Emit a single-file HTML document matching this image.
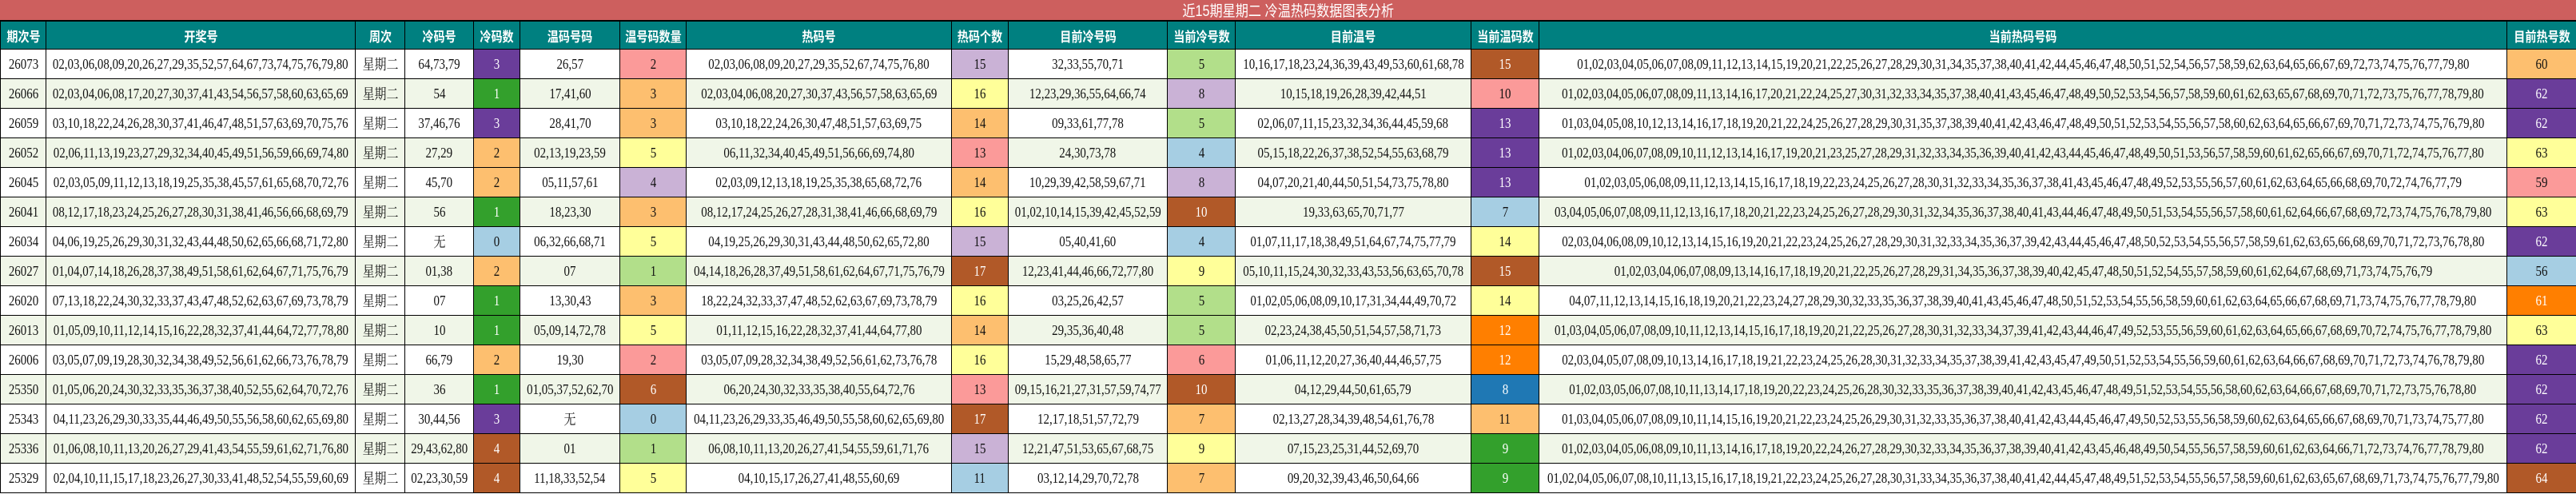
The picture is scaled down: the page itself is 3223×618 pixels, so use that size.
<!DOCTYPE html>
<html><head><meta charset="utf-8">
<style>
*{margin:0;padding:0;box-sizing:border-box}
body{width:3223px;height:618px;overflow:hidden;background:#fff;font-family:"Liberation Serif","Noto Serif CJK SC","Noto Sans CJK SC",serif;}
.t{height:27px;background:#cd5f5e;border-bottom:2px solid #000;display:flex;justify-content:center;align-items:center;color:#fff;font-family:"Liberation Sans","Noto Sans CJK SC",sans-serif;font-size:19px}
.r{display:flex;height:37px;border-bottom:1px solid #000}
.h{height:35px;background:#008080;color:#fff;font-family:"Liberation Sans","Noto Sans CJK SC",sans-serif;font-weight:bold;font-size:17px}
.g{background:#f0f6e8}
.r>p{display:flex;justify-content:center;align-items:center;border-right:1px solid #000;height:100%;white-space:nowrap;overflow:visible;font-size:18px;color:#111}
.h>p{color:#fff;font-size:17px}
.r>p:first-child{border-left:1px solid #000}
.r>p>span{display:inline-block;transform:scaleX(.83)}
.r>p:nth-child(1){width:58px}.r>p:nth-child(2){width:387px}.r>p:nth-child(3){width:62px}
.r>p:nth-child(4){width:86px}.r>p:nth-child(5){width:58px}.r>p:nth-child(6){width:125px}
.r>p:nth-child(7){width:83px}.r>p:nth-child(8){width:332px}.r>p:nth-child(9){width:71px}
.r>p:nth-child(10){width:199px}.r>p:nth-child(11){width:85px}.r>p:nth-child(12){width:295px}
.r>p:nth-child(13){width:85px}.r>p:nth-child(14){width:1211px}.r>p:nth-child(15){width:86px;border-right:none}
.r>p.P{background:#6a3d9a;color:#fff}.r>p.G{background:#33a02c;color:#fff}.r>p.B{background:#b15928;color:#fff}
.r>p.O{background:#ff7f00;color:#fff}.r>p.U{background:#1f78b4;color:#fff}
.r>p.E{background:#fdbf6f}.r>p.K{background:#fb9a99}.r>p.Y{background:#ffff99}.r>p.L{background:#cab2d6}
.r>p.M{background:#b2df8a}.r>p.A{background:#a6cee3}
</style></head><body>
<div class="t"><span style="display:inline-block;transform:scaleX(.85)">近15期星期二 冷温热码数据图表分析</span></div>
<div class="r h"><p><span>期次号</span></p><p><span>开奖号</span></p><p><span>周次</span></p><p><span>冷码号</span></p><p><span>冷码数</span></p><p><span>温码号码</span></p><p><span>温号码数量</span></p><p><span>热码号</span></p><p><span>热码个数</span></p><p><span>目前冷号码</span></p><p><span>当前冷号数</span></p><p><span>目前温号</span></p><p><span>当前温码数</span></p><p><span>当前热码号码</span></p><p><span>目前热号数</span></p></div>

<div class="r"><p><span>26073</span></p><p><span>02,03,06,08,09,20,26,27,29,35,52,57,64,67,73,74,75,76,79,80</span></p><p><span>星期二</span></p><p><span>64,73,79</span></p><p class="P"><span>3</span></p><p><span>26,57</span></p><p class="K"><span>2</span></p><p><span>02,03,06,08,09,20,27,29,35,52,67,74,75,76,80</span></p><p class="L"><span>15</span></p><p><span>32,33,55,70,71</span></p><p class="M"><span>5</span></p><p><span>10,16,17,18,23,24,36,39,43,49,53,60,61,68,78</span></p><p class="B"><span>15</span></p><p><span>01,02,03,04,05,06,07,08,09,11,12,13,14,15,19,20,21,22,25,26,27,28,29,30,31,34,35,37,38,40,41,42,44,45,46,47,48,50,51,52,54,56,57,58,59,62,63,64,65,66,67,69,72,73,74,75,76,77,79,80</span></p><p class="E"><span>60</span></p></div>

<div class="r g"><p><span>26066</span></p><p><span>02,03,04,06,08,17,20,27,30,37,41,43,54,56,57,58,60,63,65,69</span></p><p><span>星期二</span></p><p><span>54</span></p><p class="G"><span>1</span></p><p><span>17,41,60</span></p><p class="E"><span>3</span></p><p><span>02,03,04,06,08,20,27,30,37,43,56,57,58,63,65,69</span></p><p class="Y"><span>16</span></p><p><span>12,23,29,36,55,64,66,74</span></p><p class="L"><span>8</span></p><p><span>10,15,18,19,26,28,39,42,44,51</span></p><p class="K"><span>10</span></p><p><span>01,02,03,04,05,06,07,08,09,11,13,14,16,17,20,21,22,24,25,27,30,31,32,33,34,35,37,38,40,41,43,45,46,47,48,49,50,52,53,54,56,57,58,59,60,61,62,63,65,67,68,69,70,71,72,73,75,76,77,78,79,80</span></p><p class="P"><span>62</span></p></div>

<div class="r"><p><span>26059</span></p><p><span>03,10,18,22,24,26,28,30,37,41,46,47,48,51,57,63,69,70,75,76</span></p><p><span>星期二</span></p><p><span>37,46,76</span></p><p class="P"><span>3</span></p><p><span>28,41,70</span></p><p class="E"><span>3</span></p><p><span>03,10,18,22,24,26,30,47,48,51,57,63,69,75</span></p><p class="E"><span>14</span></p><p><span>09,33,61,77,78</span></p><p class="M"><span>5</span></p><p><span>02,06,07,11,15,23,32,34,36,44,45,59,68</span></p><p class="P"><span>13</span></p><p><span>01,03,04,05,08,10,12,13,14,16,17,18,19,20,21,22,24,25,26,27,28,29,30,31,35,37,38,39,40,41,42,43,46,47,48,49,50,51,52,53,54,55,56,57,58,60,62,63,64,65,66,67,69,70,71,72,73,74,75,76,79,80</span></p><p class="P"><span>62</span></p></div>

<div class="r g"><p><span>26052</span></p><p><span>02,06,11,13,19,23,27,29,32,34,40,45,49,51,56,59,66,69,74,80</span></p><p><span>星期二</span></p><p><span>27,29</span></p><p class="E"><span>2</span></p><p><span>02,13,19,23,59</span></p><p class="Y"><span>5</span></p><p><span>06,11,32,34,40,45,49,51,56,66,69,74,80</span></p><p class="K"><span>13</span></p><p><span>24,30,73,78</span></p><p class="A"><span>4</span></p><p><span>05,15,18,22,26,37,38,52,54,55,63,68,79</span></p><p class="P"><span>13</span></p><p><span>01,02,03,04,06,07,08,09,10,11,12,13,14,16,17,19,20,21,23,25,27,28,29,31,32,33,34,35,36,39,40,41,42,43,44,45,46,47,48,49,50,51,53,56,57,58,59,60,61,62,65,66,67,69,70,71,72,74,75,76,77,80</span></p><p class="Y"><span>63</span></p></div>

<div class="r"><p><span>26045</span></p><p><span>02,03,05,09,11,12,13,18,19,25,35,38,45,57,61,65,68,70,72,76</span></p><p><span>星期二</span></p><p><span>45,70</span></p><p class="E"><span>2</span></p><p><span>05,11,57,61</span></p><p class="L"><span>4</span></p><p><span>02,03,09,12,13,18,19,25,35,38,65,68,72,76</span></p><p class="E"><span>14</span></p><p><span>10,29,39,42,58,59,67,71</span></p><p class="L"><span>8</span></p><p><span>04,07,20,21,40,44,50,51,54,73,75,78,80</span></p><p class="P"><span>13</span></p><p><span>01,02,03,05,06,08,09,11,12,13,14,15,16,17,18,19,22,23,24,25,26,27,28,30,31,32,33,34,35,36,37,38,41,43,45,46,47,48,49,52,53,55,56,57,60,61,62,63,64,65,66,68,69,70,72,74,76,77,79</span></p><p class="K"><span>59</span></p></div>

<div class="r g"><p><span>26041</span></p><p><span>08,12,17,18,23,24,25,26,27,28,30,31,38,41,46,56,66,68,69,79</span></p><p><span>星期二</span></p><p><span>56</span></p><p class="G"><span>1</span></p><p><span>18,23,30</span></p><p class="E"><span>3</span></p><p><span>08,12,17,24,25,26,27,28,31,38,41,46,66,68,69,79</span></p><p class="Y"><span>16</span></p><p><span>01,02,10,14,15,39,42,45,52,59</span></p><p class="B"><span>10</span></p><p><span>19,33,63,65,70,71,77</span></p><p class="A"><span>7</span></p><p><span>03,04,05,06,07,08,09,11,12,13,16,17,18,20,21,22,23,24,25,26,27,28,29,30,31,32,34,35,36,37,38,40,41,43,44,46,47,48,49,50,51,53,54,55,56,57,58,60,61,62,64,66,67,68,69,72,73,74,75,76,78,79,80</span></p><p class="Y"><span>63</span></p></div>

<div class="r"><p><span>26034</span></p><p><span>04,06,19,25,26,29,30,31,32,43,44,48,50,62,65,66,68,71,72,80</span></p><p><span>星期二</span></p><p><span>无</span></p><p class="A"><span>0</span></p><p><span>06,32,66,68,71</span></p><p class="Y"><span>5</span></p><p><span>04,19,25,26,29,30,31,43,44,48,50,62,65,72,80</span></p><p class="L"><span>15</span></p><p><span>05,40,41,60</span></p><p class="A"><span>4</span></p><p><span>01,07,11,17,18,38,49,51,64,67,74,75,77,79</span></p><p class="Y"><span>14</span></p><p><span>02,03,04,06,08,09,10,12,13,14,15,16,19,20,21,22,23,24,25,26,27,28,29,30,31,32,33,34,35,36,37,39,42,43,44,45,46,47,48,50,52,53,54,55,56,57,58,59,61,62,63,65,66,68,69,70,71,72,73,76,78,80</span></p><p class="P"><span>62</span></p></div>

<div class="r g"><p><span>26027</span></p><p><span>01,04,07,14,18,26,28,37,38,49,51,58,61,62,64,67,71,75,76,79</span></p><p><span>星期二</span></p><p><span>01,38</span></p><p class="E"><span>2</span></p><p><span>07</span></p><p class="M"><span>1</span></p><p><span>04,14,18,26,28,37,49,51,58,61,62,64,67,71,75,76,79</span></p><p class="B"><span>17</span></p><p><span>12,23,41,44,46,66,72,77,80</span></p><p class="Y"><span>9</span></p><p><span>05,10,11,15,24,30,32,33,43,53,56,63,65,70,78</span></p><p class="B"><span>15</span></p><p><span>01,02,03,04,06,07,08,09,13,14,16,17,18,19,20,21,22,25,26,27,28,29,31,34,35,36,37,38,39,40,42,45,47,48,50,51,52,54,55,57,58,59,60,61,62,64,67,68,69,71,73,74,75,76,79</span></p><p class="A"><span>56</span></p></div>

<div class="r"><p><span>26020</span></p><p><span>07,13,18,22,24,30,32,33,37,43,47,48,52,62,63,67,69,73,78,79</span></p><p><span>星期二</span></p><p><span>07</span></p><p class="G"><span>1</span></p><p><span>13,30,43</span></p><p class="E"><span>3</span></p><p><span>18,22,24,32,33,37,47,48,52,62,63,67,69,73,78,79</span></p><p class="Y"><span>16</span></p><p><span>03,25,26,42,57</span></p><p class="M"><span>5</span></p><p><span>01,02,05,06,08,09,10,17,31,34,44,49,70,72</span></p><p class="Y"><span>14</span></p><p><span>04,07,11,12,13,14,15,16,18,19,20,21,22,23,24,27,28,29,30,32,33,35,36,37,38,39,40,41,43,45,46,47,48,50,51,52,53,54,55,56,58,59,60,61,62,63,64,65,66,67,68,69,71,73,74,75,76,77,78,79,80</span></p><p class="O"><span>61</span></p></div>

<div class="r g"><p><span>26013</span></p><p><span>01,05,09,10,11,12,14,15,16,22,28,32,37,41,44,64,72,77,78,80</span></p><p><span>星期二</span></p><p><span>10</span></p><p class="G"><span>1</span></p><p><span>05,09,14,72,78</span></p><p class="Y"><span>5</span></p><p><span>01,11,12,15,16,22,28,32,37,41,44,64,77,80</span></p><p class="E"><span>14</span></p><p><span>29,35,36,40,48</span></p><p class="M"><span>5</span></p><p><span>02,23,24,38,45,50,51,54,57,58,71,73</span></p><p class="O"><span>12</span></p><p><span>01,03,04,05,06,07,08,09,10,11,12,13,14,15,16,17,18,19,20,21,22,25,26,27,28,30,31,32,33,34,37,39,41,42,43,44,46,47,49,52,53,55,56,59,60,61,62,63,64,65,66,67,68,69,70,72,74,75,76,77,78,79,80</span></p><p class="Y"><span>63</span></p></div>

<div class="r"><p><span>26006</span></p><p><span>03,05,07,09,19,28,30,32,34,38,49,52,56,61,62,66,73,76,78,79</span></p><p><span>星期二</span></p><p><span>66,79</span></p><p class="E"><span>2</span></p><p><span>19,30</span></p><p class="K"><span>2</span></p><p><span>03,05,07,09,28,32,34,38,49,52,56,61,62,73,76,78</span></p><p class="Y"><span>16</span></p><p><span>15,29,48,58,65,77</span></p><p class="K"><span>6</span></p><p><span>01,06,11,12,20,27,36,40,44,46,57,75</span></p><p class="O"><span>12</span></p><p><span>02,03,04,05,07,08,09,10,13,14,16,17,18,19,21,22,23,24,25,26,28,30,31,32,33,34,35,37,38,39,41,42,43,45,47,49,50,51,52,53,54,55,56,59,60,61,62,63,64,66,67,68,69,70,71,72,73,74,76,78,79,80</span></p><p class="P"><span>62</span></p></div>

<div class="r g"><p><span>25350</span></p><p><span>01,05,06,20,24,30,32,33,35,36,37,38,40,52,55,62,64,70,72,76</span></p><p><span>星期二</span></p><p><span>36</span></p><p class="G"><span>1</span></p><p><span>01,05,37,52,62,70</span></p><p class="B"><span>6</span></p><p><span>06,20,24,30,32,33,35,38,40,55,64,72,76</span></p><p class="K"><span>13</span></p><p><span>09,15,16,21,27,31,57,59,74,77</span></p><p class="B"><span>10</span></p><p><span>04,12,29,44,50,61,65,79</span></p><p class="U"><span>8</span></p><p><span>01,02,03,05,06,07,08,10,11,13,14,17,18,19,20,22,23,24,25,26,28,30,32,33,35,36,37,38,39,40,41,42,43,45,46,47,48,49,51,52,53,54,55,56,58,60,62,63,64,66,67,68,69,70,71,72,73,75,76,78,80</span></p><p class="P"><span>62</span></p></div>

<div class="r"><p><span>25343</span></p><p><span>04,11,23,26,29,30,33,35,44,46,49,50,55,56,58,60,62,65,69,80</span></p><p><span>星期二</span></p><p><span>30,44,56</span></p><p class="P"><span>3</span></p><p><span>无</span></p><p class="A"><span>0</span></p><p><span>04,11,23,26,29,33,35,46,49,50,55,58,60,62,65,69,80</span></p><p class="B"><span>17</span></p><p><span>12,17,18,51,57,72,79</span></p><p class="E"><span>7</span></p><p><span>02,13,27,28,34,39,48,54,61,76,78</span></p><p class="E"><span>11</span></p><p><span>01,03,04,05,06,07,08,09,10,11,14,15,16,19,20,21,22,23,24,25,26,29,30,31,32,33,35,36,37,38,40,41,42,43,44,45,46,47,49,50,52,53,55,56,58,59,60,62,63,64,65,66,67,68,69,70,71,73,74,75,77,80</span></p><p class="P"><span>62</span></p></div>

<div class="r g"><p><span>25336</span></p><p><span>01,06,08,10,11,13,20,26,27,29,41,43,54,55,59,61,62,71,76,80</span></p><p><span>星期二</span></p><p><span>29,43,62,80</span></p><p class="B"><span>4</span></p><p><span>01</span></p><p class="M"><span>1</span></p><p><span>06,08,10,11,13,20,26,27,41,54,55,59,61,71,76</span></p><p class="L"><span>15</span></p><p><span>12,21,47,51,53,65,67,68,75</span></p><p class="Y"><span>9</span></p><p><span>07,15,23,25,31,44,52,69,70</span></p><p class="G"><span>9</span></p><p><span>01,02,03,04,05,06,08,09,10,11,13,14,16,17,18,19,20,22,24,26,27,28,29,30,32,33,34,35,36,37,38,39,40,41,42,43,45,46,48,49,50,54,55,56,57,58,59,60,61,62,63,64,66,71,72,73,74,76,77,78,79,80</span></p><p class="P"><span>62</span></p></div>

<div class="r"><p><span>25329</span></p><p><span>02,04,10,11,15,17,18,23,26,27,30,33,41,48,52,54,55,59,60,69</span></p><p><span>星期二</span></p><p><span>02,23,30,59</span></p><p class="B"><span>4</span></p><p><span>11,18,33,52,54</span></p><p class="Y"><span>5</span></p><p><span>04,10,15,17,26,27,41,48,55,60,69</span></p><p class="A"><span>11</span></p><p><span>03,12,14,29,70,72,78</span></p><p class="E"><span>7</span></p><p><span>09,20,32,39,43,46,50,64,66</span></p><p class="G"><span>9</span></p><p><span>01,02,04,05,06,07,08,10,11,13,15,16,17,18,19,21,22,23,24,25,26,27,28,30,31,33,34,35,36,37,38,40,41,42,44,45,47,48,49,51,52,53,54,55,56,57,58,59,60,61,62,63,65,67,68,69,71,73,74,75,76,77,79,80</span></p><p class="B"><span>64</span></p></div>
</body></html>
